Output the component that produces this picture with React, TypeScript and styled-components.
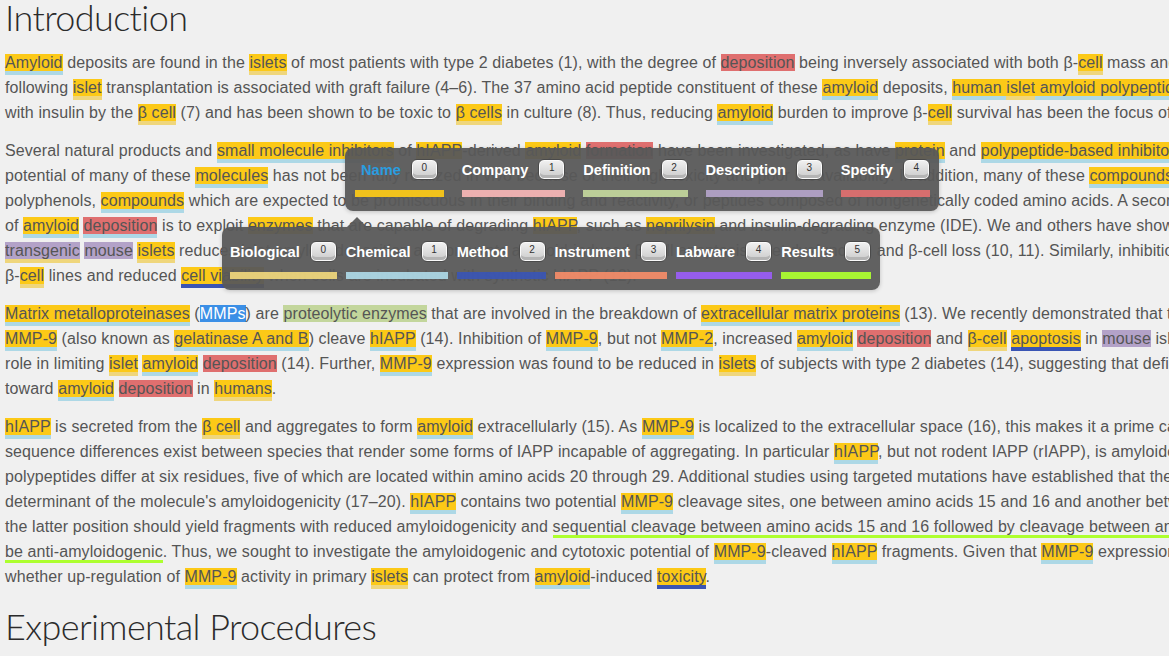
import React from "react";
import styled, { createGlobalStyle } from "styled-components";

const Global = createGlobalStyle`
  html, body { margin: 0; padding: 0; background: #f0f0f0; }
  body { overflow: hidden; }
`;

const Page = styled.div`
  position: relative;
  width: 1169px;
  height: 656px;
  overflow: hidden;
  padding: 0 0 0 5px;
  box-sizing: border-box;
  font-family: "Liberation Sans", Arial, sans-serif;
  font-size: 16px;
  letter-spacing: 0.1px;
  color: #555;
`;

const Heading = styled.h2<{ $top?: number }>`
  margin: ${(p) => p.$top ?? 0}px 0 16px 0;
  font-family: Lato, "Open Sans", sans-serif;
  font-weight: 300;
  font-size: 36px;
  line-height: 34px;
  letter-spacing: -0.6px;
  color: #2b2b2b;
  white-space: nowrap;
`;

const Para = styled.div`
  margin: 0 0 13px 0;
`;

const Line = styled.div`
  white-space: nowrap;
  line-height: 25px;
  height: 25px;
`;

const Mark = styled.span<{ $bg: string; $ul: string; $sel?: boolean; $thin?: boolean }>`
  background: ${(p) => p.$bg};
  border-bottom: ${(p) => (p.$ul === "transparent" ? "none" : `${p.$thin ? 3 : 4}px solid ${p.$ul}`)};
  color: ${(p) => (p.$sel ? "#fff" : "inherit")};
`;

const BG: Record<string, string> = {
  y: "#fcc917",
  r: "#df6f6f",
  g: "#c3d69c",
  p: "#b3a2c8",
  s: "#3b8fe6",
  n: "transparent",
};
const UL: Record<string, string> = {
  c: "#add8e6",
  b: "#efd67c",
  m: "#3a55b4",
  r: "#adff2f",
  "0": "transparent",
};

function renderLine(s: string) {
  const re = /\[([^\]|]+)\|([a-z])([a-z0])\]/g;
  const out: React.ReactNode[] = [];
  let last = 0;
  let m: RegExpExecArray | null;
  let k = 0;
  while ((m = re.exec(s))) {
    if (m.index > last) out.push(s.slice(last, m.index));
    out.push(
      <Mark key={k++} $bg={BG[m[2]]} $ul={UL[m[3]]} $sel={m[2] === "s"} $thin={m[3] === "r"}>
        {m[1]}
      </Mark>
    );
    last = re.lastIndex;
  }
  if (last < s.length) out.push(s.slice(last));
  return out;
}

const paragraphs: string[][] = [
  [
    "[Amyloid|yc] deposits are found in the [islets|yb] of most patients with type 2 diabetes (1), with the degree of [deposition|r0] being inversely associated with both β-[cell|yb] mass and",
    "following [islet|yb] transplantation is associated with graft failure (4–6). The 37 amino acid peptide constituent of these [amyloid|yc] deposits, [human |yc][islet|yb][ amyloid polypeptide|yc] (hIAPP), is co-secreted",
    "with insulin by the [β cell|yb] (7) and has been shown to be toxic to [β cells|yb] in culture (8). Thus, reducing [amyloid|yc] burden to improve β-[cell|yb] survival has been the focus of",
  ],
  [
    "Several natural products and [small molecule inhibitors|yc] of [hIAPP|y0]-derived [amyloid|y0] [formation|r0] have been investigated, as have [protein|yc] and [polypeptide-based inhibitors|yc] of",
    "potential of many of these [molecules|yc] has not been fully realized in vivo because of their high toxicity and poor bioavailability. In addition, many of these [compounds|yc] are",
    "polyphenols, [compounds|yc] which are expected to be promiscuous in their binding and reactivity, or peptides composed of nongenetically coded amino acids. A second",
    "of [amyloid|yc] [deposition|rc] is to exploit [enzymes|y0] that are capable of degrading [hIAPP|y0], such as [neprilysin|y0] and insulin-degrading enzyme (IDE). We and others have shown",
    "[transgenic|pb] [mouse|p0] [islets|yb] reduces islet amyloid deposition and prevents amyloid-induced β-cell apoptosis, islet dysfunction and β-cell loss (10, 11). Similarly, inhibition",
    "β-[cell|yb] lines and reduced [cell viability|ym] when cells are incubated with synthetic hIAPP (12).",
  ],
  [
    "[Matrix metalloproteinases|yc] ([MMPs|s0]) are [proteolytic enzymes|g0] that are involved in the breakdown of [extracellular matrix proteins|yc] (13). We recently demonstrated that the",
    "[MMP-9|yc] (also known as [gelatinase A and B|yc]) cleave [hIAPP|yc] (14). Inhibition of [MMP-9|yc], but not [MMP-2|yc], increased [amyloid|yc] [deposition|r0] and [β-cell|yb] [apoptosis|ym] in [mouse|p0] islets",
    "role in limiting [islet|yb] [amyloid|yc] [deposition|r0] (14). Further, [MMP-9|yc] expression was found to be reduced in [islets|yb] of subjects with type 2 diabetes (14), suggesting that deficiency",
    "toward [amyloid|yc] [deposition|r0] in [humans|yb].",
  ],
  [
    "[hIAPP|yc] is secreted from the [β cell|yb] and aggregates to form [amyloid|yc] extracellularly (15). As [MMP-9|yc] is localized to the extracellular space (16), this makes it a prime candidate",
    "sequence differences exist between species that render some forms of IAPP incapable of aggregating. In particular [hIAPP|yc], but not rodent IAPP (rIAPP), is amyloidogenic",
    "polypeptides differ at six residues, five of which are located within amino acids 20 through 29. Additional studies using targeted mutations have established that the",
    "determinant of the molecule's amyloidogenicity (17–20). [hIAPP|yc] contains two potential [MMP-9|yc] cleavage sites, one between amino acids 15 and 16 and another between",
    "the latter position should yield fragments with reduced amyloidogenicity and [sequential cleavage between amino acids 15 and 16 followed by cleavage between amino acids|nr]",
    "[be anti-amyloidogenic|nr]. Thus, we sought to investigate the amyloidogenic and cytotoxic potential of [MMP-9|yc]-cleaved [hIAPP|yc] fragments. Given that [MMP-9|yc] expression",
    "whether up-regulation of [MMP-9|yc] activity in primary [islets|yb] can protect from [amyloid|yc]-induced [toxicity|ym].",
  ],
];

/* ---------- annotation popups ---------- */

const Popup = styled.div<{ $x: number; $y: number; $gap: number; $pl: number; $pt: number; $pb: number; $arrow?: number }>`
  position: absolute;
  left: ${(p) => p.$x}px;
  top: ${(p) => p.$y}px;
  display: flex;
  gap: ${(p) => p.$gap}px;
  padding: ${(p) => p.$pt}px 9px ${(p) => p.$pb}px ${(p) => p.$pl}px;
  background: rgba(88, 88, 88, 0.95);
  border-radius: 8px;
  box-shadow: 0 1px 4px rgba(0, 0, 0, 0.2);
  font-family: "Liberation Sans", Arial, sans-serif;
  letter-spacing: 0;
  &::before {
    content: "";
    display: ${(p) => (p.$arrow ? "block" : "none")};
    position: absolute;
    left: ${(p) => p.$arrow ?? 0}px;
    top: -10px;
    border-left: 10px solid transparent;
    border-right: 10px solid transparent;
    border-bottom: 10px solid rgba(88, 88, 88, 0.95);
  }
`;

const Item = styled.div`
  display: flex;
  flex-direction: column;
  gap: 10px;
`;

const Head = styled.div<{ $pad: number }>`
  display: flex;
  align-items: center;
  gap: 10px;
  height: 21px;
  padding: 0 ${(p) => p.$pad}px;
`;

const Label = styled.span<{ $active?: boolean }>`
  font-weight: bold;
  font-size: 14.6px;
  color: ${(p) => (p.$active ? "#2a9de0" : "#fff")};
`;

const Key = styled.span`
  display: inline-flex;
  justify-content: center;
  align-items: flex-start;
  width: 27px;
  height: 21px;
  box-sizing: border-box;
  padding-top: 2px;
  border: 1px solid #4a4a4a;
  border-radius: 6px;
  background: linear-gradient(#f2f2f2, #c9c9c9);
  box-shadow: inset 0 0 0 1px #fafafa, inset 0 -4px 0 #b4b4b4;
  font-size: 10px;
  line-height: 11px;
  color: #333;
`;

const Bar = styled.div<{ $c: string }>`
  height: 7px;
  background: ${(p) => p.$c};
  opacity: 0.93;
`;

type Tag = { name: string; color: string; active?: boolean };

const tagsA: Tag[] = [
  { name: "Name", color: "#fcc917", active: true },
  { name: "Company", color: "#f6b6b6" },
  { name: "Definition", color: "#c3d69c" },
  { name: "Description", color: "#b3a2c8" },
  { name: "Specify", color: "#df6f6f" },
];

const tagsB: Tag[] = [
  { name: "Biological", color: "#efd67c" },
  { name: "Chemical", color: "#add8e6" },
  { name: "Method", color: "#3a55b4" },
  { name: "Instrument", color: "#f48c68" },
  { name: "Labware", color: "#9a5cf5" },
  { name: "Results", color: "#adff2f" },
];

type PopupProps = { tags: Tag[]; x: number; y: number; gap: number; pl: number; pt: number; pb: number; arrow?: number };

function TagPopup(props: PopupProps) {
  return (
    <Popup $x={props.x} $y={props.y} $gap={props.gap} $pl={props.pl} $pt={props.pt} $pb={props.pb} $arrow={props.arrow}>
      {props.tags.map((t, i) => (
        <Item key={t.name}>
          <Head $pad={t.active ? 6 : 0}>
            <Label $active={t.active}>{t.name}</Label>
            <Key>{i}</Key>
          </Head>
          <Bar $c={t.color} />
        </Item>
      ))}
    </Popup>
  );
}

export default function App() {
  return (
    <>
      <Global />
      <Page>
        <Heading>Introduction</Heading>
        {paragraphs.map((p, i) => (
          <Para key={i}>
            {p.map((l, j) => (
              <Line key={j}>{renderLine(l)}</Line>
            ))}
          </Para>
        ))}
        <Heading $top={20}>Experimental Procedures</Heading>
        <TagPopup tags={tagsA} x={345} y={148} gap={18} pl={10} pt={11} pb={14} />
        <TagPopup tags={tagsB} x={222} y={227} gap={9} pl={8} pt={14} pb={11} arrow={125} />
      </Page>
    </>
  );
}
